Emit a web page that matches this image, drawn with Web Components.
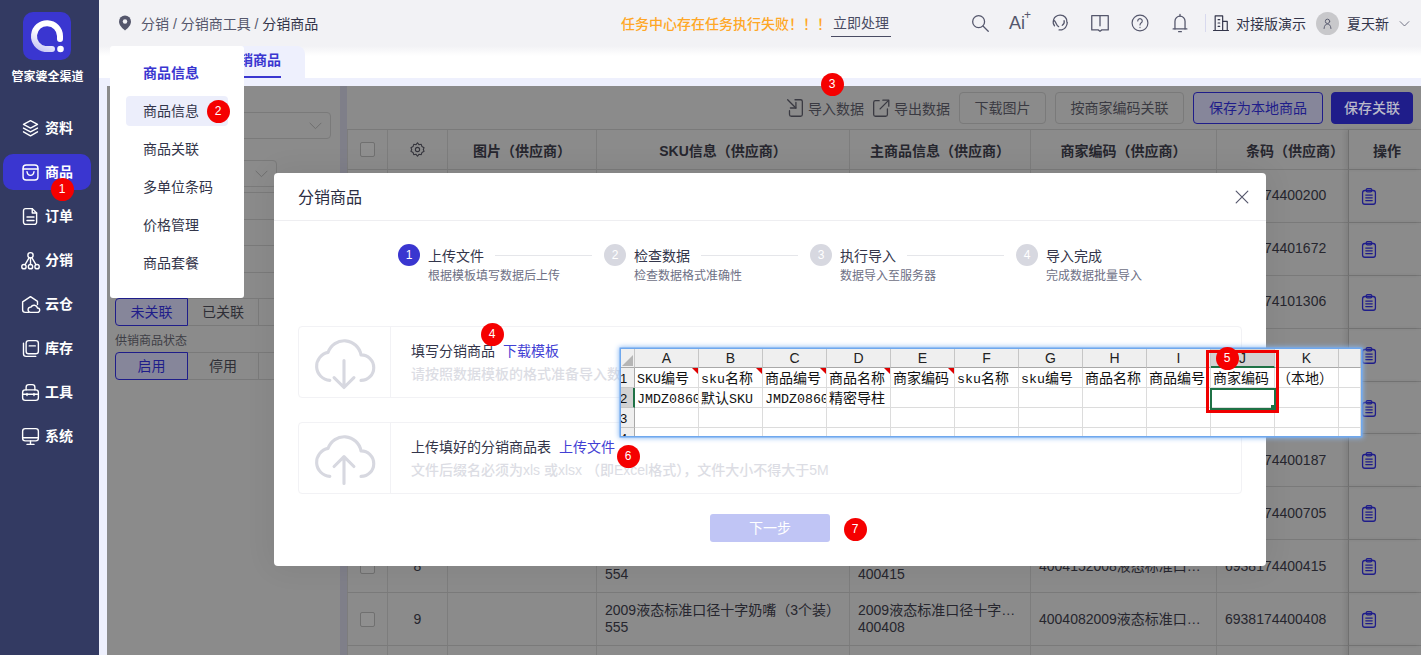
<!DOCTYPE html>
<html lang="zh">
<head>
<meta charset="utf-8">
<title>分销商品</title>
<style>
  html, body { margin: 0; height: 100%; overflow: hidden; background: #fff; }
  body { font-family: "Liberation Sans", "Noto Sans CJK SC", sans-serif; font-size: 14px; color: #2b2d42; }
</style>
</head>
<body>
<app-shell>
  <side-nav slot="side"></side-nav>
  <top-bar></top-bar>
  <tab-strip></tab-strip>
  <work-area>
    <filter-panel slot="left"></filter-panel>
    <goods-table slot="right"></goods-table>
  </work-area>
  <fly-menu slot="over"></fly-menu>
  <import-dialog slot="over"></import-dialog>
  <sheet-shot slot="over"></sheet-shot>
  <num-badge slot="over" n="1" x="62" y="189"></num-badge>
  <num-badge slot="over" n="2" x="218" y="111"></num-badge>
  <num-badge slot="over" n="3" x="832" y="84"></num-badge>
  <num-badge slot="over" n="4" x="492" y="334"></num-badge>
  <num-badge slot="over" n="5" x="1227" y="358"></num-badge>
  <num-badge slot="over" n="6" x="628" y="456"></num-badge>
  <num-badge slot="over" n="7" x="855" y="529"></num-badge>
</app-shell>

<script>
const svg = (size, body, sw = 1.7) =>
  `<svg width="${size}" height="${size}" viewBox="0 0 24 24" fill="none" stroke="currentColor" stroke-width="${sw}" stroke-linecap="round" stroke-linejoin="round">${body}</svg>`;

const ICONS = {
  layers: `<path d="M12 3l8 4.3-8 4.3-8-4.3z"/><path d="M4 11.5l8 4.3 8-4.3"/><path d="M4 15.8l8 4.6 8-4.6"/>`,
  bag: `<rect x="3.5" y="3.5" width="17" height="17" rx="3.5"/><path d="M3.5 8h17"/><path d="M8 11c.5 3 2 4.3 4 4.3s3.5-1.3 4-4.3"/>`,
  doc: `<path d="M6.5 3h7.5l5 5v10.5a2.5 2.5 0 0 1-2.5 2.5h-10a2.5 2.5 0 0 1-2.5-2.5v-13a2.5 2.5 0 0 1 2.5-2.5z"/><path d="M14 3v5h5"/><path d="M8 12.5h8M8 16.5h8"/>`,
  tree: `<circle cx="12" cy="6" r="3"/><circle cx="4.5" cy="19" r="2.5"/><circle cx="12" cy="19" r="2.5"/><circle cx="19.5" cy="19" r="2.5"/><path d="M12 9v7.5M10.3 9L5.8 16.8M13.7 9l4.500 7.800"/>`,
  cloudHouse: `<path d="M10 21H6a3 3 0 0 1-3-3V9l9-6 8 5.500V12"/><path d="M12 21a3 3 0 0 1 .5-6 4 4 0 0 1 7.500 1 2.500 2.500 0 0 1 0 5z"/>`,
  stock: `<path d="M4 6v12a3 3 0 0 0 3 3h11"/><rect x="7" y="3" width="14" height="15" rx="3"/><path d="M10.500 9h7"/>`,
  toolbox: `<rect x="3" y="9" width="18" height="12" rx="3"/><path d="M7 9V6a3 3 0 0 1 3-3h4a3 3 0 0 1 3 3v3"/><path d="M3 14h18M8 13v2.500M16 13v2.500"/>`,
  monitor: `<rect x="3" y="3" width="18" height="14" rx="3"/><path d="M3 13.500h18M12 17v4M8 21h8"/>`,
  search: `<circle cx="10.500" cy="10.500" r="6.500"/><path d="M15.500 15.500L21 21"/>`,
  headset: `<path d="M6 15C3.500 12 4 4 12 3.500c5-.2 8 3.500 7.500 7.500"/><path d="M6 9.500c2 2 2 5.500 4.500 6.500"/><path d="M20 11.500c-.5 4-2.500 7-6 8h-3"/><path d="M16.500 9.500c.5 2-.5 4-2 5"/>`,
  book: `<path d="M3 4h18v15.500h-7l-2 1.500-2-1.500H3z"/><path d="M12 4v11"/>`,
  help: `<circle cx="12" cy="12" r="9.500"/><path d="M9.300 9.500a2.700 2.700 0 1 1 4.200 2.300c-1 .7-1.500 1.200-1.500 2.500"/><path d="M12 17.300v.2"/>`,
  bell: `<path d="M6.500 18.500V10a5.500 5.500 0 0 1 11 0v8.500"/><path d="M4.500 18.500h15M12 2.500v2M10.500 21.500h3"/>`,
  building: `<path d="M5 21V3.500h9V21"/><path d="M14 10h5.500V21"/><path d="M3 21h18M8.500 8h2M8.500 12h2M8.500 16h2"/>`,
  user: `<circle cx="12" cy="8.500" r="3.500"/><path d="M6.500 20c.3-5 2.500-7 5.500-7s5.200 2 5.500 7"/>`,
  chevron: `<path d="M5 9l7 7 7-7"/>`,
  pin: `<path d="M12 2a8 8 0 0 1 8 8c0 5-4.500 9-8 12-3.500-3-8-7-8-12a8 8 0 0 1 8-8z" fill="currentColor" stroke="none"/><circle cx="12" cy="10" r="3" fill="#f2f2f5" stroke="none"/>`,
  importIn: `<path d="M4 3l9 9"/><path d="M13 6v6H7"/><path d="M12 3h6a2 2 0 0 1 2 2v14a2 2 0 0 1-2 2H8a2 2 0 0 1-2-2v-4"/>`,
  exportOut: `<path d="M10 4H6a2 2 0 0 0-2 2v13a2 2 0 0 0 2 2h11a2 2 0 0 0 2-2v-6"/><path d="M11 13l9-9"/><path d="M14 3.500h6.500V10"/>`,
  gear: `<circle cx="12" cy="12" r="3"/><path d="M12 2.500l2 2.700 3.300-.5 1 3.200 3 1.500-1.100 2.600 1.100 2.600-3 1.500-1 3.200-3.300-.5-2 2.700-2-2.700-3.300.5-1-3.200-3-1.500 1.100-2.600L2.700 9.400l3-1.500 1-3.200 3.300.5z"/>`,
  clip: `<rect x="5" y="6" width="14" height="15" rx="2.500"/><rect x="9" y="4" width="6" height="3.500" rx="1.200"/><path d="M8.500 11h7M8.500 14h7M8.500 17h7"/>`,
  cloudDown: `<path d="M7 18.500a5 5 0 0 1-.6-9.900A6 6 0 0 1 18 9.500a4.500 4.500 0 0 1 0 9"/><path d="M12 11.500v9M8.500 17.500l3.500 3.500 3.500-3.500"/>`,
  cloudUp: `<path d="M7 18.500a5 5 0 0 1-.6-9.900A6 6 0 0 1 18 9.500a4.500 4.500 0 0 1 0 9"/><path d="M12 21v-9.500M8.500 15l3.500-3.500 3.500 3.500"/>`,
};

class AppShell extends HTMLElement {
  constructor() {
    super();
    this.attachShadow({ mode: "open" });
    this.shadowRoot.innerHTML = `
      <style>
        :host { display: grid; grid-template-columns: 99px 1fr; width: 1421px; height: 655px; position: relative; overflow: hidden; }
        #main { display: flex; flex-direction: column; min-width: 0; height: 655px; overflow: hidden; }
      </style>
      <slot name="side"></slot>
      <div id="main"><slot></slot></div>
      <slot name="over"></slot>`;
  }
}
customElements.define("app-shell", AppShell);

class SideNav extends HTMLElement {
  constructor() {
    super();
    this.attachShadow({ mode: "open" });
    const items = [
      ["layers", "资料"], ["bag", "商品", true], ["doc", "订单"], ["tree", "分销"],
      ["cloudHouse", "云仓"], ["stock", "库存"], ["toolbox", "工具"], ["monitor", "系统"],
    ];
    this.shadowRoot.innerHTML = `
      <style>
        :host { display: block; background: #333a62; height: 655px; color: #fff; }
        #logo { width: 48px; height: 48px; margin: 12px auto 0 23px; border-radius: 10px; background: #3a36d0; display: block; }
        #name { margin-top: 9px; height: 16px; line-height: 16px; font-size: 12px; font-weight: 700; text-align: center; padding-right: 4px; white-space: nowrap; }
        nav { margin-top: 25px; display: flex; flex-direction: column; gap: 8px; padding: 0 8px 0 3px; }
        .item { height: 36px; border-radius: 10px; display: flex; align-items: center; padding-left: 17px; gap: 4px; font-size: 14px; font-weight: 700; }
        .item span { padding-bottom: 2px; }
        .item.on { background: #3a36d0; }
        svg { flex: none; }
      </style>
      <svg id="logo" viewBox="0 0 48 48">
        <defs><linearGradient id="ring" x1="0.1" y1="1" x2="0.6" y2="0"><stop offset="0" stop-color="#c9c8f4"/><stop offset="0.6" stop-color="#fff"/></linearGradient></defs>
        <path d="M29 37H22A13 13 0 1 1 37 24v3" fill="none" stroke="url(#ring)" stroke-width="6" stroke-linecap="round"/>
        <circle cx="37.500" cy="37" r="3.300" fill="#fff"/>
      </svg>
      <div id="name">管家婆全渠道</div>
      <nav>${items.map(([i, t, on]) => `<div class="item ${on ? "on" : ""}">${svg(21, ICONS[i], 1.6)}<span>${t}</span></div>`).join("")}</nav>`;
  }
}
customElements.define("side-nav", SideNav);

class TopBar extends HTMLElement {
  constructor() {
    super();
    this.attachShadow({ mode: "open" });
    this.shadowRoot.innerHTML = `
      <style>
        :host { display: flex; align-items: center; height: 46px; flex: none; background: #f2f2f5; color: #55576c; font-size: 14px; padding: 0 0 0 17px; box-sizing: border-box; position: relative; }
        #crumb { display: flex; align-items: center; gap: 7px; width: 505px; flex: none; white-space: nowrap; }
        #crumb b { font-weight: 400; color: #33354a; }
        #warn { color: #ffa726; font-size: 14px; font-weight: 500; white-space: nowrap; width: 210px; flex: none; }
        #now { color: #4a4c63; font-size: 14px; border-bottom: 1px solid #4a4c63; height: 24px; line-height: 23px; width: 60px; text-align: center; flex: none; white-space: nowrap; margin-top: 3px; }
        #icons { display: flex; align-items: center; margin-left: 69px; color: #55576c; }
        #icons span { width: 40px; display: flex; justify-content: center; }
        #ai { font-size: 18px; line-height: 22px; position: relative; padding-right: 6px; box-sizing: border-box; }
        #ai i { position: absolute; right: 9px; top: -3px; font-style: normal; font-size: 12px; line-height: 12px; }
        #sep { width: 1px; height: 18px; background: #d8d9ee; margin: 0 5px 0 5px; }
        #org { display: flex; align-items: center; gap: 5px; font-size: 14px; color: #33354a; white-space: nowrap; }
        #avatar { width: 23px; height: 23px; border-radius: 50%; background: #c8c8cb; margin: 0 8px 0 10px; display: flex; align-items: center; justify-content: center; color: #55576c; }
        #me { color: #33354a; font-size: 14px; white-space: nowrap; }
        #down { margin-left: 8px; color: #55576c; display: flex; }
      </style>
      <div id="crumb">${svg(18, ICONS.pin)}<span>分销 / 分销商工具 / <b>分销商品</b></span></div>
      <div id="warn">任务中心存在任务执行失败！！！</div>
      <div id="now">立即处理</div>
      <div id="icons">
        <span>${svg(22, ICONS.search, 1.4)}</span>
        <span id="ai">Ai<i>+</i></span>
        <span>${svg(22, ICONS.headset, 1.4)}</span>
        <span>${svg(22, ICONS.book, 1.4)}</span>
        <span>${svg(20, ICONS.help, 1.4)}</span>
        <span>${svg(22, ICONS.bell, 1.4)}</span>
      </div>
      <div id="sep"></div>
      <div id="org">${svg(20, ICONS.building, 1.4)}<span>对接版演示</span></div>
      <div id="avatar">${svg(15, ICONS.user, 1.5)}</div>
      <div id="me">夏天新</div>
      <div id="down">${svg(15, ICONS.chevron, 1.3)}</div>`;
  }
}
customElements.define("top-bar", TopBar);

class TabStrip extends HTMLElement {
  constructor() {
    super();
    this.attachShadow({ mode: "open" });
    this.shadowRoot.innerHTML = `
      <style>
        :host { display: flex; height: 32px; flex: none; background: linear-gradient(#f2f2f5, #fff 10px); padding-left: 101px; }
        #tab { width: 105px; height: 32px; background: #eef0fd; border-radius: 0 8px 0 0; box-sizing: border-box; padding-left: 25px; position: relative; }
        #tab b { display: block; width: 56px; height: 32px; line-height: 29px; box-sizing: border-box; border-bottom: 2px solid #3a36d0; font-size: 14px; color: #3a36d0; white-space: nowrap; }
      </style>
      <div id="tab"><b>分销商品</b></div>`;
  }
}
customElements.define("tab-strip", TabStrip);

class WorkArea extends HTMLElement {
  constructor() {
    super();
    this.attachShadow({ mode: "open" });
    this.shadowRoot.innerHTML = `
      <style>
        :host { display: flex; flex-direction: column; flex: 1; min-height: 0; background: #eef0fd; padding-top: 8px; }
        #row { display: flex; flex: 1; min-height: 0; margin-left: 8px; background: #7f7f89; gap: 7px; }
      </style>
      <div id="row"><slot name="left"></slot><slot name="right"></slot></div>`;
  }
}
customElements.define("work-area", WorkArea);

class FilterPanel extends HTMLElement {
  constructor() {
    super();
    this.attachShadow({ mode: "open" });
    this.shadowRoot.innerHTML = `
      <style>
        :host { display: block; width: 233px; flex: none; background: #8b8b8b; box-sizing: border-box; padding: 26px 0 0 8px; color: #2e2e36; }
        .sel { height: 27px; box-sizing: border-box; border: 1px solid #7a7a7a; border-radius: 4px; display: flex; align-items: center; justify-content: flex-end; padding-right: 5px; color: #6d6d6d; }
        #a { width: 216px; }
        #b { width: 162px; margin-top: 21px; }
        #lines { margin-top: 5px; width: 170px; }
        #lines div { height: 26.500px; box-sizing: border-box; border-top: 1px solid #7a7a7a; }
        .seg { display: flex; height: 28px; width: 220px; font-size: 14px; }
        .seg span { width: 73px; box-sizing: border-box; border: 1px solid #7a7a7a; border-left: 0; text-align: center; line-height: 26px; }
        .seg span:first-child { border: 1px solid #1f1d8a; border-radius: 4px 0 0 4px; background: #86869a; color: #1f1d8a; }
        .seg span:nth-child(2) { width: 71px; }
        #lab { font-size: 12px; color: #3e3e46; height: 26px; line-height: 30px; white-space: nowrap; }
      </style>
      <div class="sel" id="a">${svg(19, ICONS.chevron, 1.2)}</div>
      <div class="sel" id="b">${svg(19, ICONS.chevron, 1.2)}</div>
      <div id="lines"><div></div><div></div><div></div><div></div></div>
      <div class="seg"><span>未关联</span><span>已关联</span><span></span></div>
      <div id="lab">供销商品状态</div>
      <div class="seg"><span>启用</span><span>停用</span><span></span></div>`;
  }
}
customElements.define("filter-panel", FilterPanel);

class GoodsTable extends HTMLElement {
  constructor() {
    super();
    this.attachShadow({ mode: "open" });
    const rows = [
      ["", "", "", "", "6938174400200"], ["", "", "", "", "6938174401672"], ["", "", "", "", "6938174101306"],
      ["", "", "", "", ""], ["", "", "", "", ""], ["", "", "", "", "6938174400187"], ["", "", "", "", "6938174400705"],
      ["8", "2008液态标准口径十字奶嘴（3个装）<br>554", "2008液态标准口径十字…<br>400415", "4004152008液态标准口…", "6938174400415"],
      ["9", "2009液态标准口径十字奶嘴（3个装）<br>555", "2009液态标准口径十字…<br>400408", "4004082009液态标准口…", "6938174400408"],
      ["", "", "", "", ""],
    ];
    const body = rows.map((r) => `
      <div class="row">
        <div class="c"><i class="box"></i></div>
        <div class="c">${r[0]}</div>
        <div class="c"></div>
        <div class="c t"><div>${r[1]}</div></div>
        <div class="c t"><div>${r[2]}</div></div>
        <div class="c t"><div>${r[3]}</div></div>
        <div class="c t"><div>${r[4]}</div></div>
        <div class="c act">${svg(22, ICONS.clip, 1.4)}</div>
      </div>`).join("");
    this.shadowRoot.innerHTML = `
      <style>
        :host { display: block; flex: 1; min-width: 0; background: #8b8b8b; overflow: hidden; color: #26262e; }
        #tools { height: 43px; display: flex; align-items: center; justify-content: flex-end; padding-right: 8px; box-sizing: border-box; font-size: 14px; color: #3a3a42; }
        .txt { display: flex; align-items: center; gap: 2px; white-space: nowrap; margin-right: 6px; }
        .btn { height: 32px; box-sizing: border-box; border: 1px solid #7a7a7a; border-radius: 4px; line-height: 30px; text-align: center; margin-left: 9px; white-space: nowrap; }
        .txt + .btn { margin-left: 3px; }
        #b1 { width: 87px; } #b2 { width: 129px; }
        #b3 { width: 130px; border-color: #1f1d8a; color: #1f1d8a; background: #86869a; }
        #b4 { width: 82px; margin-left: 8px; background: #1f1d8a; border-color: #1f1d8a; color: #b9b9c9; font-weight: 500; }
        .row { display: grid; grid-template-columns: 40px 60px 149px 253px 181px 186px 132px 73px; height: 52.900px; box-sizing: border-box; border-bottom: 1px solid #7a7a7a; }
        .head { height: 41px; border-top: 1px solid #7a7a7a; font-weight: 700; font-size: 14px; }
        .c { border-left: 1px solid #7d7d7d; display: flex; align-items: center; justify-content: center; white-space: nowrap; min-width: 0; box-sizing: border-box; }
        .t { justify-content: flex-start; padding-left: 8px; line-height: 17px; }
        .c:nth-child(8) { border-left: 1px solid #707070; box-shadow: -3px 0 4px rgba(0,0,0,.08); }
        .head .c:nth-child(7) { justify-content: flex-start; padding-left: 29px; overflow: hidden; }
        .head .c:nth-child(8) { padding-left: 4px; }
        .act { color: #1f1d8a; justify-content: flex-start; padding-left: 9px; }
        .box { display: block; width: 13px; height: 13px; border: 1px solid #707070; border-radius: 2px; background: #8f8f8f; }
        .gear { color: #33333b; }
      </style>
      <div id="tools">
        <div class="txt">${svg(22, ICONS.importIn, 1.4)}<span>导入数据</span></div>
        <div class="txt">${svg(22, ICONS.exportOut, 1.4)}<span>导出数据</span></div>
        <div class="btn" id="b1">下载图片</div>
        <div class="btn" id="b2">按商家编码关联</div>
        <div class="btn" id="b3">保存为本地商品</div>
        <div class="btn" id="b4">保存关联</div>
      </div>
      <div class="row head">
        <div class="c"><i class="box"></i></div>
        <div class="c gear">${svg(17, ICONS.gear, 1.5)}</div>
        <div class="c">图片（供应商）</div>
        <div class="c">SKU信息（供应商）</div>
        <div class="c">主商品信息（供应商）</div>
        <div class="c">商家编码（供应商）</div>
        <div class="c">条码（供应商）</div>
        <div class="c">操作</div>
      </div>
      ${body}`;
  }
}
customElements.define("goods-table", GoodsTable);

class FlyMenu extends HTMLElement {
  constructor() {
    super();
    this.attachShadow({ mode: "open" });
    const items = ["商品信息", "商品关联", "多单位条码", "价格管理", "商品套餐"];
    this.shadowRoot.innerHTML = `
      <style>
        :host { position: absolute; left: 110px; top: 46px; width: 134px; height: 252px; box-sizing: border-box; background: #fff; border-radius: 3px; padding: 12px 16px 0; color: #33354a; font-size: 14px; }
        .row { height: 30px; line-height: 30px; padding-left: 17px; margin-bottom: 8px; border-radius: 4px; white-space: nowrap; }
        #title { color: #3a36d0; font-weight: 700; margin-bottom: 8px; }
        .on { background: #eceefb; }
      </style>
      <div class="row" id="title">商品信息</div>
      ${items.map((t, i) => `<div class="row ${i === 0 ? "on" : ""}">${t}</div>`).join("")}`;
  }
}
customElements.define("fly-menu", FlyMenu);

class StepItem extends HTMLElement {
  constructor() {
    super();
    this.attachShadow({ mode: "open" });
    const on = this.hasAttribute("on");
    const last = this.hasAttribute("last");
    this.shadowRoot.innerHTML = `
      <style>
        :host { display: flex; width: 206px; flex: none; gap: 8px; }
        #n { width: 22px; height: 22px; border-radius: 50%; background: ${on ? "#3a36d0" : "#d7d8e0"}; color: #fff; font-size: 12px; line-height: 22px; text-align: center; flex: none; }
        #body { flex: 1; min-width: 0; }
        #top { display: flex; align-items: center; gap: 11px; height: 22px; color: #33354a; font-size: 14px; white-space: nowrap; }
        #line { flex: 1; height: 1px; background: #e5e6ea; margin: 1px 12px 0 0; ${last ? "display:none" : ""} }
        #sub { font-size: 12px; color: #6e7085; line-height: 16px; margin-top: 2px; white-space: nowrap; }
      </style>
      <div id="n">${this.getAttribute("n")}</div>
      <div id="body">
        <div id="top"><span>${this.getAttribute("title")}</span><div id="line"></div></div>
        <div id="sub">${this.getAttribute("sub")}</div>
      </div>`;
  }
}
customElements.define("step-item", StepItem);

class UploadCard extends HTMLElement {
  constructor() {
    super();
    this.attachShadow({ mode: "open" });
    this.shadowRoot.innerHTML = `
      <style>
        :host { display: flex; height: 72px; box-sizing: border-box; border: 1px solid #f2f2f5; border-radius: 4px; }
        #icon { width: 92px; flex: none; border-right: 1px solid #f2f2f5; display: flex; align-items: center; justify-content: center; color: #d7d8e0; padding-right: 2px; box-sizing: border-box; }
        #text { padding: 13px 0 0 20px; white-space: nowrap; min-width: 0; }
        #head { display: flex; gap: 8px; color: #33354a; font-size: 14px; height: 22px; line-height: 22px; }
        #head a { color: #4240d4; }
        #sub { color: #dcdde4; font-size: 14px; height: 22px; line-height: 22px; margin-top: 1px; font-weight: 500; }
      </style>
      <div id="icon">${svg(68, ICONS[this.getAttribute("icon")], 1.1)}</div>
      <div id="text">
        <div id="head"><span>${this.getAttribute("title")}</span><a>${this.getAttribute("link")}</a></div>
        <div id="sub">${this.getAttribute("sub")}</div>
      </div>`;
  }
}
customElements.define("upload-card", UploadCard);

class ImportDialog extends HTMLElement {
  constructor() {
    super();
    this.attachShadow({ mode: "open" });
    this.shadowRoot.innerHTML = `
      <style>
        :host { position: absolute; left: 274px; top: 173px; width: 992px; height: 393px; background: #fff; border-radius: 4px; box-shadow: 0 0 30px rgba(0,0,0,.08); display: flex; flex-direction: column; }
        header { height: 48px; flex: none; box-sizing: border-box; border-bottom: 1px solid #eeeef1; display: flex; align-items: center; justify-content: space-between; padding: 0 14px 0 24px; font-size: 16px; color: #2b2d42; }
        header span:first-child { padding-bottom: 2px; }
        #x { color: #55576c; display: flex; }
        #steps { display: flex; padding: 23px 0 0 124px; height: 82px; flex: none; }
        #cards { display: flex; flex-direction: column; gap: 24px; padding: 0 24px; }
        #next { width: 120px; height: 28px; margin: 20px auto 0; background: #c0c5f5; color: #fff; border-radius: 3px; text-align: center; line-height: 28px; font-size: 14px; }
      </style>
      <header><span>分销商品</span><span id="x">${svg(20, '<path d="M5 5l14 14M19 5L5 19"/>', 1.4)}</span></header>
      <div id="steps">
        <step-item on n="1" title="上传文件" sub="根据模板填写数据后上传"></step-item>
        <step-item n="2" title="检查数据" sub="检查数据格式准确性"></step-item>
        <step-item n="3" title="执行导入" sub="数据导入至服务器"></step-item>
        <step-item last n="4" title="导入完成" sub="完成数据批量导入"></step-item>
      </div>
      <div id="cards">
        <upload-card icon="cloudDown" title="填写分销商品" link="下载模板" sub="请按照数据模板的格式准备导入数据"></upload-card>
        <upload-card icon="cloudUp" title="上传填好的分销商品表" link="上传文件" sub="文件后缀名必须为xls 或xlsx （即Excel格式），文件大小不得大于5M"></upload-card>
      </div>
      <div id="next">下一步</div>`;
  }
}
customElements.define("import-dialog", ImportDialog);

class SheetShot extends HTMLElement {
  constructor() {
    super();
    this.attachShadow({ mode: "open" });
    const cols = "ABCDEFGHIJK".split("");
    const lat = (s) => s.replace(/[A-Za-z0-9]+/g, (m) => `<b>${m}</b>`);
    const row1 = ["SKU编号", "sku名称", "商品编号", "商品名称", "商家编码", "sku名称", "sku编号", "商品名称", "商品编号", "商家编码", "（本地）"];
    const row2 = ["JMDZ0860", "默认SKU", "JMDZ0860", "精密导柱", "", "", "", "", "", "", ""];
    const cells = (vals, flag) => vals.map((v, i) => `<div class="cell ${flag && i < 5 ? "mark" : ""} ${v.startsWith("JMDZ") ? "cut" : ""}">${lat(v)}</div>`).join("") + `<div class="cell"></div>`;
    this.shadowRoot.innerHTML = `
      <style>
        :host { position: absolute; left: 621px; top: 349px; width: 740px; height: 87px; background: #fff; overflow: hidden; box-shadow: 0 0 0 1.500px #6fa8ee, 0 0 5px 2px #8ab8f4; font-family: "Liberation Mono", "Noto Sans CJK SC", monospace; font-size: 14px; color: #111; }
        #grid { display: grid; grid-template-columns: 14px repeat(11, 64px) 22px; grid-template-rows: 19px 20px 20px 20px 20px; }
        .hd { background: #efefef; border-right: 1px solid #c6c6c6; border-bottom: 1px solid #a9a9a9; font: 14px/19px "Liberation Sans", sans-serif; text-align: center; box-sizing: border-box; color: #222; }
        .hd.on { background: #d2d2d2; border-bottom: 2px solid #1f7246; }
        .corner { position: relative; }
        .corner::after { content: ""; position: absolute; right: 1px; bottom: 1px; border-style: solid; border-width: 0 0 11px 11px; border-color: transparent transparent #b5b5b5 transparent; }
        .num { background: #efefef; border-right: 1px solid #a9a9a9; border-bottom: 1px solid #c6c6c6; font: 13px/21px "Liberation Sans", sans-serif; overflow: hidden; text-indent: -1px; box-sizing: border-box; }
        .num.on { background: #d2d2d2; border-right: 2px solid #1f7246; }
        .cell { border-right: 1px solid #dcdcdc; border-bottom: 1px solid #dcdcdc; box-sizing: border-box; line-height: 23px; height: 20px; white-space: nowrap; overflow: visible; padding-left: 2px; position: relative; min-width: 0; }
        .cell b { font-weight: 400; font-size: 13.300px; }
        .cut { overflow: hidden; }
        .mark::after { content: ""; position: absolute; right: 0; top: 0; border-style: solid; border-width: 0 6px 6px 0; border-color: transparent #e00000 transparent transparent; }
        #sel { position: absolute; left: 589px; top: 39px; width: 66px; height: 22px; box-sizing: border-box; border: 2px solid #1f7246; }
        #sel::after { content: ""; position: absolute; right: -2px; bottom: -2px; width: 5px; height: 5px; background: #1f7246; }
        #red { position: absolute; left: 585px; top: 1px; width: 73px; height: 63px; box-sizing: border-box; border: 3px solid #f00000; }
      </style>
      <div id="grid">
        <div class="hd corner"></div>
        ${cols.map((c) => `<div class="hd ${c === "J" ? "on" : ""}">${c}</div>`).join("")}<div class="hd"></div>
        <div class="num">1</div>${cells(row1, true)}
        <div class="num on">2</div>${cells(row2, false)}
        <div class="num">3</div>${cells(Array(11).fill(""), false)}
        <div class="num">4</div>${cells(Array(11).fill(""), false)}
      </div>
      <div id="sel"></div>
      <div id="red"></div>`;
  }
}
customElements.define("sheet-shot", SheetShot);

class NumBadge extends HTMLElement {
  constructor() {
    super();
    this.attachShadow({ mode: "open" });
    this.shadowRoot.innerHTML = `
      <style>
        :host { position: absolute; width: 23px; height: 23px; margin: -11.500px 0 0 -11.500px; border-radius: 50%; background: #f50000; color: #fff; font: 12px/23px "Liberation Sans", sans-serif; text-align: center; }
      </style>
      <slot></slot>`;
  }
  connectedCallback() {
    this.style.left = this.getAttribute("x") + "px";
    this.style.top = this.getAttribute("y") + "px";
    this.textContent = this.getAttribute("n");
  }
}
customElements.define("num-badge", NumBadge);
</script>
</body>
</html>
